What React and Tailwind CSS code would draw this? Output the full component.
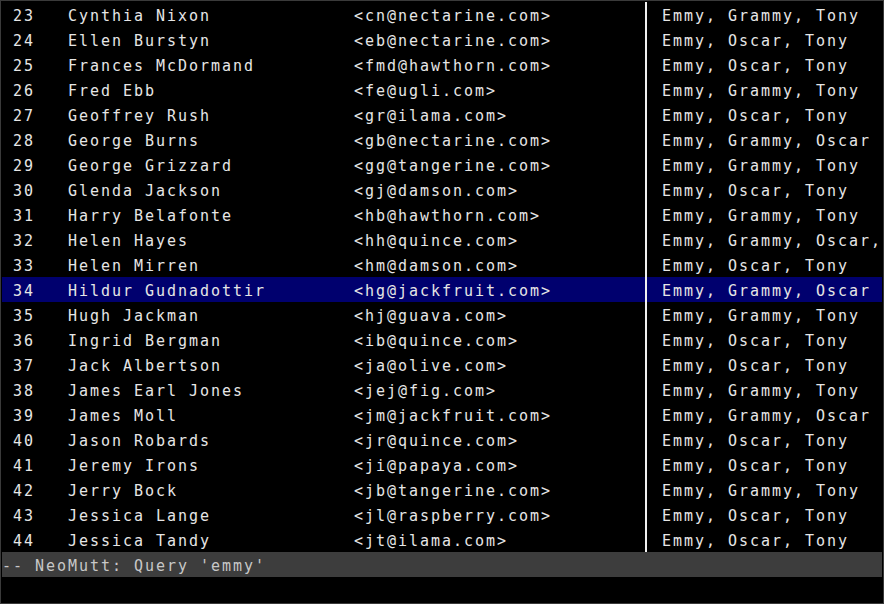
import React from "react";

const rows = [
  ["23", "Cynthia Nixon", "<cn@nectarine.com>", "Emmy, Grammy, Tony"],
  ["24", "Ellen Burstyn", "<eb@nectarine.com>", "Emmy, Oscar, Tony"],
  ["25", "Frances McDormand", "<fmd@hawthorn.com>", "Emmy, Oscar, Tony"],
  ["26", "Fred Ebb", "<fe@ugli.com>", "Emmy, Grammy, Tony"],
  ["27", "Geoffrey Rush", "<gr@ilama.com>", "Emmy, Oscar, Tony"],
  ["28", "George Burns", "<gb@nectarine.com>", "Emmy, Grammy, Oscar"],
  ["29", "George Grizzard", "<gg@tangerine.com>", "Emmy, Grammy, Tony"],
  ["30", "Glenda Jackson", "<gj@damson.com>", "Emmy, Oscar, Tony"],
  ["31", "Harry Belafonte", "<hb@hawthorn.com>", "Emmy, Grammy, Tony"],
  ["32", "Helen Hayes", "<hh@quince.com>", "Emmy, Grammy, Oscar,"],
  ["33", "Helen Mirren", "<hm@damson.com>", "Emmy, Oscar, Tony"],
  ["34", "Hildur Gudnadottir", "<hg@jackfruit.com>", "Emmy, Grammy, Oscar"],
  ["35", "Hugh Jackman", "<hj@guava.com>", "Emmy, Grammy, Tony"],
  ["36", "Ingrid Bergman", "<ib@quince.com>", "Emmy, Oscar, Tony"],
  ["37", "Jack Albertson", "<ja@olive.com>", "Emmy, Oscar, Tony"],
  ["38", "James Earl Jones", "<jej@fig.com>", "Emmy, Grammy, Tony"],
  ["39", "James Moll", "<jm@jackfruit.com>", "Emmy, Grammy, Oscar"],
  ["40", "Jason Robards", "<jr@quince.com>", "Emmy, Oscar, Tony"],
  ["41", "Jeremy Irons", "<ji@papaya.com>", "Emmy, Oscar, Tony"],
  ["42", "Jerry Bock", "<jb@tangerine.com>", "Emmy, Grammy, Tony"],
  ["43", "Jessica Lange", "<jl@raspberry.com>", "Emmy, Oscar, Tony"],
  ["44", "Jessica Tandy", "<jt@ilama.com>", "Emmy, Oscar, Tony"],
];

const QueryRow = ({ num, name, email, awards, selected }) => (
  <div
    className={`flex h-[25px] leading-[29px] whitespace-pre ${
      selected ? "bg-[#00006e]" : ""
    }`}
  >
    <div className="w-[66px] pl-[11px]">{num}</div>
    <div className="w-[286px]">{name}</div>
    <div className="w-[286px]">{email}</div>
    <div className="w-[11px] flex justify-center">
      <div className="w-[2px] h-[25px] bg-[#f0f0f0]" />
    </div>
    <div className="flex-1 pl-[11px] overflow-hidden h-[25px]">{awards}</div>
  </div>
);

export default function App() {
  return (
    <div
      className="w-[884px] h-[604px] bg-black border border-[#3a3a3a] p-[1px] text-[15px] tracking-[1.97px] text-[#e6e6e6] overflow-hidden"
      style={{ fontFamily: '"DejaVu Sans Mono", monospace' }}
    >
      {rows.map((r) => (
        <QueryRow
          key={r[0]}
          num={r[0]}
          name={r[1]}
          email={r[2]}
          awards={r[3]}
          selected={r[0] === "34"}
        />
      ))}
      {/* status line */}
      <div className="h-[25px] leading-[29px] bg-[#3d3d3d] text-[#c8c8c8] whitespace-pre overflow-hidden">
        -- NeoMutt: Query 'emmy'
      </div>
      <div className="h-[25px]" />
    </div>
  );
}
